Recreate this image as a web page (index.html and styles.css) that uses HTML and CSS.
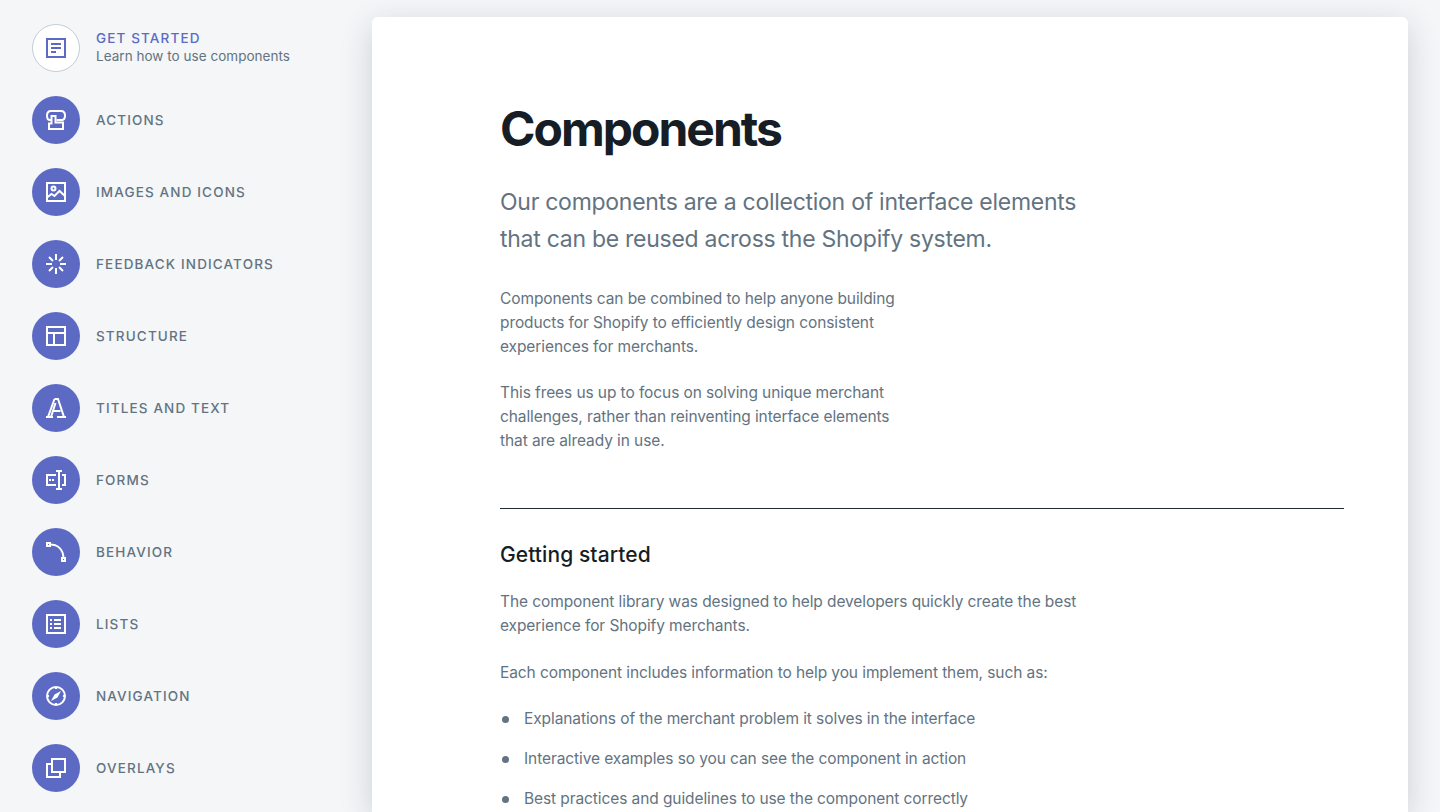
FILE: index.html
```html
<!DOCTYPE html>
<html lang="en">
<head>
    <meta charset="UTF-8">
    <title>Components</title>
    <link rel="stylesheet" href="styles.css">
</head>
<body>
    <nav class="sidebar">
        <a class="nav-item active">
            <span class="nav-icon">
                <svg viewBox="0 0 20 20"><path d="M1 1h18v18H1z"/><path d="M5 6h10M5 10h10M5 14h5"/></svg>
            </span>
            <span class="nav-text">
                <span class="nav-title">Get started</span>
                <span class="nav-sub">Learn how to use components</span>
            </span>
        </a>
        <a class="nav-item">
            <span class="nav-icon">
                <svg viewBox="0 0 20 20"><path d="M5 10H4C2 10 1 8.500 1 5.500S2.500 1 5 1h10c2.500 0 4 1.500 4 4.500S18 10 15.500 10H10.500"/><path d="M5.500 13.500V6h4v6.500h7.500v6.500H3v-5.500z"/></svg>
            </span>
            <span class="nav-title">Actions</span>
        </a>
        <a class="nav-item">
            <span class="nav-icon">
                <svg viewBox="0 0 20 20"><path d="M1 1h18v18H1z"/><circle cx="7.500" cy="6.500" r="2"/><path d="M1 15.500l4.500-3.500 3 2 5-5 5.500 5"/></svg>
            </span>
            <span class="nav-title">Images and icons</span>
        </a>
        <a class="nav-item">
            <span class="nav-icon">
                <svg viewBox="0 0 20 20"><path d="M10 0v6M10 14v6M0 10h6M14 10h6M3 3l4 4M13 13l4 4M17 3l-4 4M7 13l-4 4"/></svg>
            </span>
            <span class="nav-title">Feedback indicators</span>
        </a>
        <a class="nav-item">
            <span class="nav-icon">
                <svg viewBox="0 0 20 20"><path d="M1 1h18v18H1zM1 7h18M8 7v12"/></svg>
            </span>
            <span class="nav-title">Structure</span>
        </a>
        <a class="nav-item">
            <span class="nav-icon">
                <svg viewBox="0 0 20 20"><path d="M0 19h7M11 19h9M8.500 1h3.500l6 18M8.500 1L2 19M9.500 5L5 19M6.500 13h8"/></svg>
            </span>
            <span class="nav-title">Titles and text</span>
        </a>
        <a class="nav-item">
            <span class="nav-icon">
                <svg viewBox="0 0 20 20"><path d="M10 5H1v10h9M16 5h3v10h-3M10 1h6M10 19h6M13 1v18M4 9v2M7 9v2"/></svg>
            </span>
            <span class="nav-title">Forms</span>
        </a>
        <a class="nav-item">
            <span class="nav-icon">
                <svg viewBox="0 0 20 20"><path d="M1 1h3v3H1zM16 16h3v3h-3z"/><path d="M4 2.500c7 0 13 4 13.500 13.500"/></svg>
            </span>
            <span class="nav-title">Behavior</span>
        </a>
        <a class="nav-item">
            <span class="nav-icon">
                <svg viewBox="0 0 20 20"><path d="M1 1h18v18H1z"/><path d="M8 6h7M8 10h7M8 14h7M4 6h2M4 10h2M4 14h2"/></svg>
            </span>
            <span class="nav-title">Lists</span>
        </a>
        <a class="nav-item">
            <span class="nav-icon">
                <svg viewBox="0 0 20 20"><circle cx="10" cy="10" r="9"/><path class="fill" d="M15 5L11.500 11.500 8.500 8.500zM5 15L8.500 8.500 11.500 11.500z"/><path d="M10 1v2M10 17v2M1 10h2M17 10h2"/></svg>
            </span>
            <span class="nav-title">Navigation</span>
        </a>
        <a class="nav-item">
            <span class="nav-icon">
                <svg viewBox="0 0 20 20"><path d="M6 1h13v13H6z"/><path d="M6 6H1v13h13v-5"/></svg>
            </span>
            <span class="nav-title">Overlays</span>
        </a>
    </nav>

    <main class="card">
        <h1>Components</h1>
        <p class="lead">Our components are a collection of interface elements that can be reused across the Shopify system.</p>
        <p class="intro">Components can be combined to help anyone building products for Shopify to efficiently design consistent experiences for merchants.</p>
        <p class="intro">This frees us up to focus on solving unique merchant challenges, rather than reinventing interface elements that are already in use.</p>
        <hr>
        <h2>Getting started</h2>
        <p class="body-text">The component library was designed to help developers quickly create the best experience for Shopify merchants.</p>
        <p class="body-text">Each component includes information to help you implement them, such as:</p>
        <ul>
            <li>Explanations of the merchant problem it solves in the interface</li>
            <li>Interactive examples so you can see the component in action</li>
            <li>Best practices and guidelines to use the component correctly</li>
        </ul>
    </main>
</body>
</html>
```

FILE: styles.css
```css
html, body {
    height: 812px;
    overflow: hidden;
}
body {
    margin: 0;
    display: flex;
    align-items: flex-start;
    background-color: #f4f6f8;
    font-family: Inter, 'Noto Sans', sans-serif;
    color: #637381;
}

/* sidebar */
.sidebar {
    width: 372px;
    flex-shrink: 0;
    padding: 24px 0 0 32px;
    box-sizing: border-box;
    display: flex;
    flex-direction: column;
    gap: 24px;
}
.nav-item {
    display: flex;
    align-items: center;
    gap: 16px;
    height: 48px;
}
.nav-icon {
    width: 48px;
    height: 48px;
    flex-shrink: 0;
    box-sizing: border-box;
    border-radius: 50%;
    background-color: #5c6ac4;
    display: flex;
    align-items: center;
    justify-content: center;
}
.nav-icon svg {
    width: 20px;
    height: 20px;
    fill: none;
    stroke: #fff;
    stroke-width: 2;
}
.nav-icon svg .fill {
    fill: #fff;
    stroke: none;
}
.nav-text {
    display: flex;
    flex-direction: column;
    margin-top: -2px;
}
.nav-title {
    font-size: 13.5px;
    line-height: 18px;
    font-weight: 450;
    letter-spacing: 1.14px;
    text-transform: uppercase;
    color: #637381;
}
.nav-sub {
    font-size: 13.5px;
    line-height: 18px;
    letter-spacing: 0.03px;
    color: #637381;
}
.active .nav-icon {
    background-color: #fff;
    border: 1px solid #c4cdd5;
}
.active .nav-icon svg {
    stroke: #5c6ac4;
}
.active .nav-title {
    color: #5c6ac4;
}

/* main card */
.card {
    flex: 1;
    margin: 17px 32px 0 0;
    height: 795px;
    padding: 80px 64px 0 128px;
    box-sizing: border-box;
    overflow: hidden;
    background-color: #fff;
    border-radius: 6px 6px 0 0;
    box-shadow: 0 8px 32px rgba(33, 43, 54, 0.18);
}
h1 {
    margin: 0;
    font-size: 48px;
    line-height: 64px;
    font-weight: 700;
    letter-spacing: -2px;
    color: #161d25;
}
.lead {
    margin: 23px 0 0;
    max-width: 600px;
    font-size: 23px;
    line-height: 37px;
    letter-spacing: -0.27px;
}
.intro {
    margin: 0 0 22px;
    max-width: 400px;
    font-size: 15.5px;
    line-height: 24px;
    letter-spacing: -0.09px;
}
.lead + .intro {
    margin-top: 29px;
}
hr {
    margin: 55px 0 0;
    border: none;
    border-top: 1px solid #212b36;
}
h2 {
    margin: 30px 0 0;
    font-size: 21px;
    line-height: 32px;
    font-weight: 450;
    letter-spacing: 0.08px;
    color: #161d25;
}
.body-text {
    margin: 23px 0 0;
    max-width: 600px;
    font-size: 15.5px;
    line-height: 24px;
    letter-spacing: -0.09px;
}
h2 + .body-text {
    margin-top: 19px;
}
ul {
    margin: 22px 0 0;
    padding: 0;
    list-style: none;
}
li {
    position: relative;
    padding-left: 24px;
    margin-bottom: 16px;
    font-size: 15.5px;
    line-height: 24px;
    letter-spacing: -0.09px;
}
li::before {
    content: "";
    position: absolute;
    left: 2px;
    top: 9px;
    width: 7px;
    height: 7px;
    border-radius: 50%;
    background-color: #637381;
}
```
